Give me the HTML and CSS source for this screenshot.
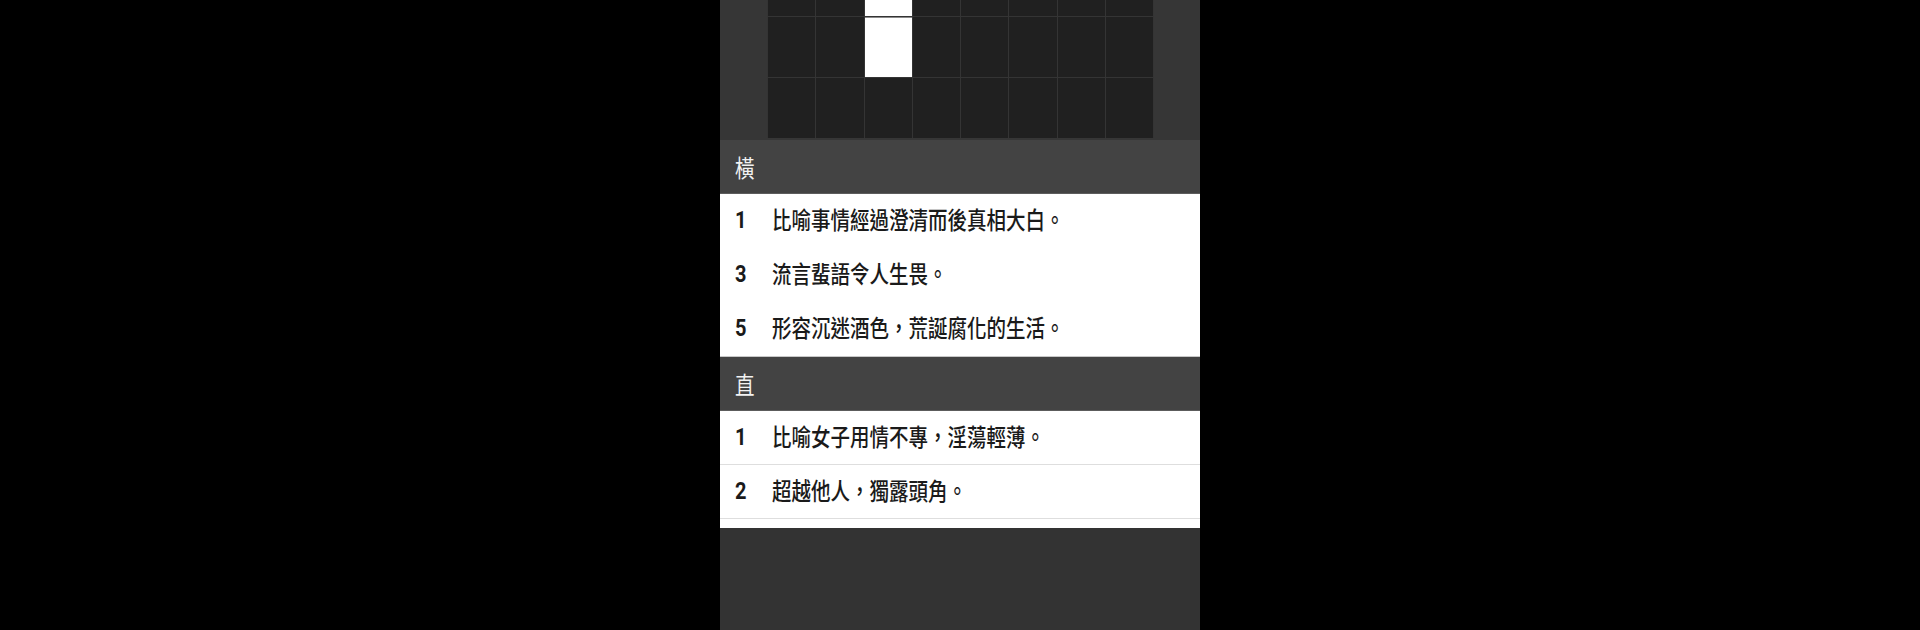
FILE: index.html
```html
<!DOCTYPE html>
<html lang="zh-Hant">
<head>
<meta charset="utf-8">
<title>Crossword</title>
<link rel="stylesheet" href="styles.css">
</head>
<body>
<div class="screen">
  <div class="board">
    <div class="grid">
      <div class="cell"></div><div class="cell"></div><div class="cell white"></div><div class="cell"></div><div class="cell"></div><div class="cell"></div><div class="cell"></div><div class="cell"></div>
      <div class="cell"></div><div class="cell"></div><div class="cell white joined"></div><div class="cell"></div><div class="cell"></div><div class="cell"></div><div class="cell"></div><div class="cell"></div>
      <div class="cell"></div><div class="cell"></div><div class="cell"></div><div class="cell"></div><div class="cell"></div><div class="cell"></div><div class="cell"></div><div class="cell"></div>
    </div>
  </div>
  <div class="section-head"><span class="head-txt">橫</span></div>
  <ul class="clues">
    <li class="clue"><span class="num">1</span><span class="txt">比喻事情經過澄清而後真相大白。</span></li>
    <li class="clue"><span class="num">3</span><span class="txt">流言蜚語令人生畏。</span></li>
    <li class="clue"><span class="num">5</span><span class="txt">形容沉迷酒色，荒誕腐化的生活。</span></li>
  </ul>
  <div class="section-head"><span class="head-txt">直</span></div>
  <ul class="clues lined">
    <li class="clue"><span class="num">1</span><span class="txt">比喻女子用情不專，淫蕩輕薄。</span></li>
    <li class="clue"><span class="num">2</span><span class="txt">超越他人，獨露頭角。</span></li>
  </ul>
  <div class="bottom"></div>
</div>
</body>
</html>
```

FILE: styles.css
```css
html, body {
  margin: 0;
  padding: 0;
  background: #000;
  height: 630px;
  overflow: hidden;
}
.screen {
  width: 480px;
  height: 630px;
  margin: 0 auto;
  display: flex;
  flex-direction: column;
  background: #ffffff;
  font-family: "Noto Sans CJK TC", "Noto Sans CJK SC", sans-serif;
}
.board {
  background: #363636;
  padding: 0 46px 1px 47px;
  height: 139px;
}
.grid {
  display: grid;
  grid-template-columns: repeat(8, 1fr);
  grid-template-rows: 16px 60px 60px;
  gap: 1px;
  background: #343434;
  padding: 0 1px 1px 1px;
  height: 138px;
  box-sizing: border-box;
}
.cell {
  background: #202020;
}
.cell.white {
  background: #ffffff;
}
.cell.joined {
  box-shadow: inset 0 1px 0 #8a8a8a;
}
.section-head {
  background: #434343;
  color: #f2f2f2;
  height: 53px;
  border-bottom: 1px solid #5c5c5c;
  display: flex;
  align-items: center;
  padding-left: 15px;
  font-size: 19.5px;
}
.head-txt {
  display: inline-block;
  transform: scaleY(1.2);
}
.clues {
  list-style: none;
  margin: 0;
  padding: 0;
  background: #fff;
  border-bottom: 1px solid #c8c8c8;
}
.clue {
  height: 54px;
  line-height: 52px;
  padding-left: 15px;
  color: #1a1a1a;
  white-space: nowrap;
}
.lined {
  border-bottom: none;
  padding-bottom: 9px;
}
.lined .clue {
  height: 53px;
  border-bottom: 1px solid #dedede;
}
.num {
  display: inline-block;
  width: 37px;
  font-family: Roboto, "Liberation Sans", sans-serif;
  font-weight: 700;
  font-size: 20px;
  transform: scaleY(1.2);
  transform-origin: left 65%;
}
.txt {
  display: inline-block;
  font-size: 19.5px;
  font-weight: 500;
  transform: scaleY(1.2);
  transform-origin: left 60%;
}
.bottom {
  flex: 1;
  background: #333333;
}
```
